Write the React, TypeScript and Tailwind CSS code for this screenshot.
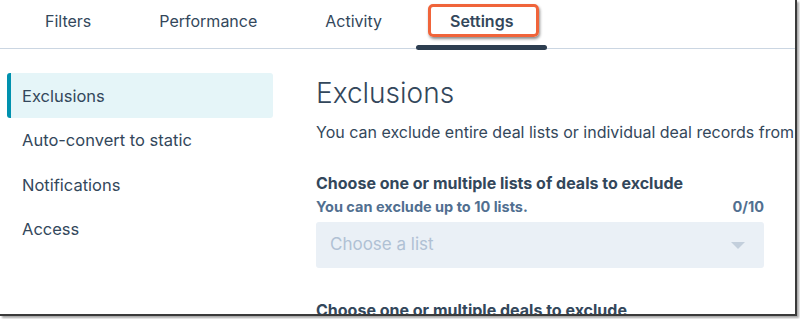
const tabs = ['Filters', 'Performance', 'Activity', 'Settings'];
const sideItems = ['Exclusions', 'Auto-convert to static', 'Notifications', 'Access'];

export default function App() {
  return (
    <div
      className="w-[800px] h-[319px] bg-white overflow-hidden"
      style={{ fontFamily: 'Inter, "Noto Sans", sans-serif' }}
    >
      <div className="relative w-[797px] h-[316px] bg-white border-r-2 border-b-2 border-[#3a3a3a] shadow-[2px_2px_2px_rgba(0,0,0,0.35)] overflow-hidden text-[#33475b]">
        {/* Tabs */}
        <div className="relative h-[49px] border-b border-[#cbd6e2] flex pl-[11px]">
          {tabs.map((t) => {
            const active = t === 'Settings';
            return (
              <div key={t} className="relative h-full px-[34px] flex items-start pt-[11px]">
                <span className={`text-[16px] leading-[20px] ${active ? 'font-semibold' : 'font-normal'}`}>{t}</span>
                {active && (
                  <>
                    <div className="absolute left-0 right-0 bottom-[-2px] h-[5px] rounded-full bg-[#2d3e50]" />
                    <div className="absolute left-[12px] right-[8px] top-[4px] h-[33px] rounded-[5px] border-[3px] border-[#f0643a] shadow-[1px_2px_3px_rgba(0,0,0,0.45)]" />
                  </>
                )}
              </div>
            );
          })}
        </div>

        <div className="flex">
          {/* Sidebar */}
          <div className="w-[266px] ml-[7px] mt-[24px] shrink-0">
            {sideItems.map((s, i) => (
              <div
                key={s}
                className={`h-[44.5px] flex items-center pt-[2px] text-[16.5px] ${
                  i === 0 ? 'bg-[#e5f5f8] border-l-4 border-[#0091ae] rounded-[3px] pl-[11px]' : 'pl-[15px]'
                }`}
              >
                {s}
              </div>
            ))}
          </div>

          {/* Main */}
          <div className="ml-[43px] pt-[27px] flex-1 min-w-0">
            <h1 className="text-[28px] leading-[34px] font-light whitespace-nowrap">Exclusions</h1>
            <p className="mt-[11px] text-[16px] leading-[22px] whitespace-nowrap">
              You can exclude entire deal lists or individual deal records from this list.
            </p>
            <div className="mt-[29px] w-[448px]">
              <div className="text-[16px] leading-[22px] font-bold whitespace-nowrap">
                Choose one or multiple lists of deals to exclude
              </div>
              <div className="mt-[4px] flex justify-between text-[14.5px] leading-[17px] font-bold text-[#516f90]">
                <span>You can exclude up to 10 lists.</span>
                <span>0/10</span>
              </div>
              <div className="mt-[7px] h-[46px] rounded-[3px] bg-[#eaf0f6] flex items-center justify-between pl-[14px] pr-[19px]">
                <span className="text-[17px] text-[#b0c1d4]">Choose a list</span>
                <svg width="14" height="7" viewBox="0 0 14 7">
                  <path d="M0 0 L14 0 L7 7 Z" fill="#c3cfdc" />
                </svg>
              </div>
              <div className="mt-[31px] text-[16px] leading-[22px] font-bold whitespace-nowrap">
                Choose one or multiple deals to exclude
              </div>
            </div>
          </div>
        </div>
      </div>
    </div>
  );
}
